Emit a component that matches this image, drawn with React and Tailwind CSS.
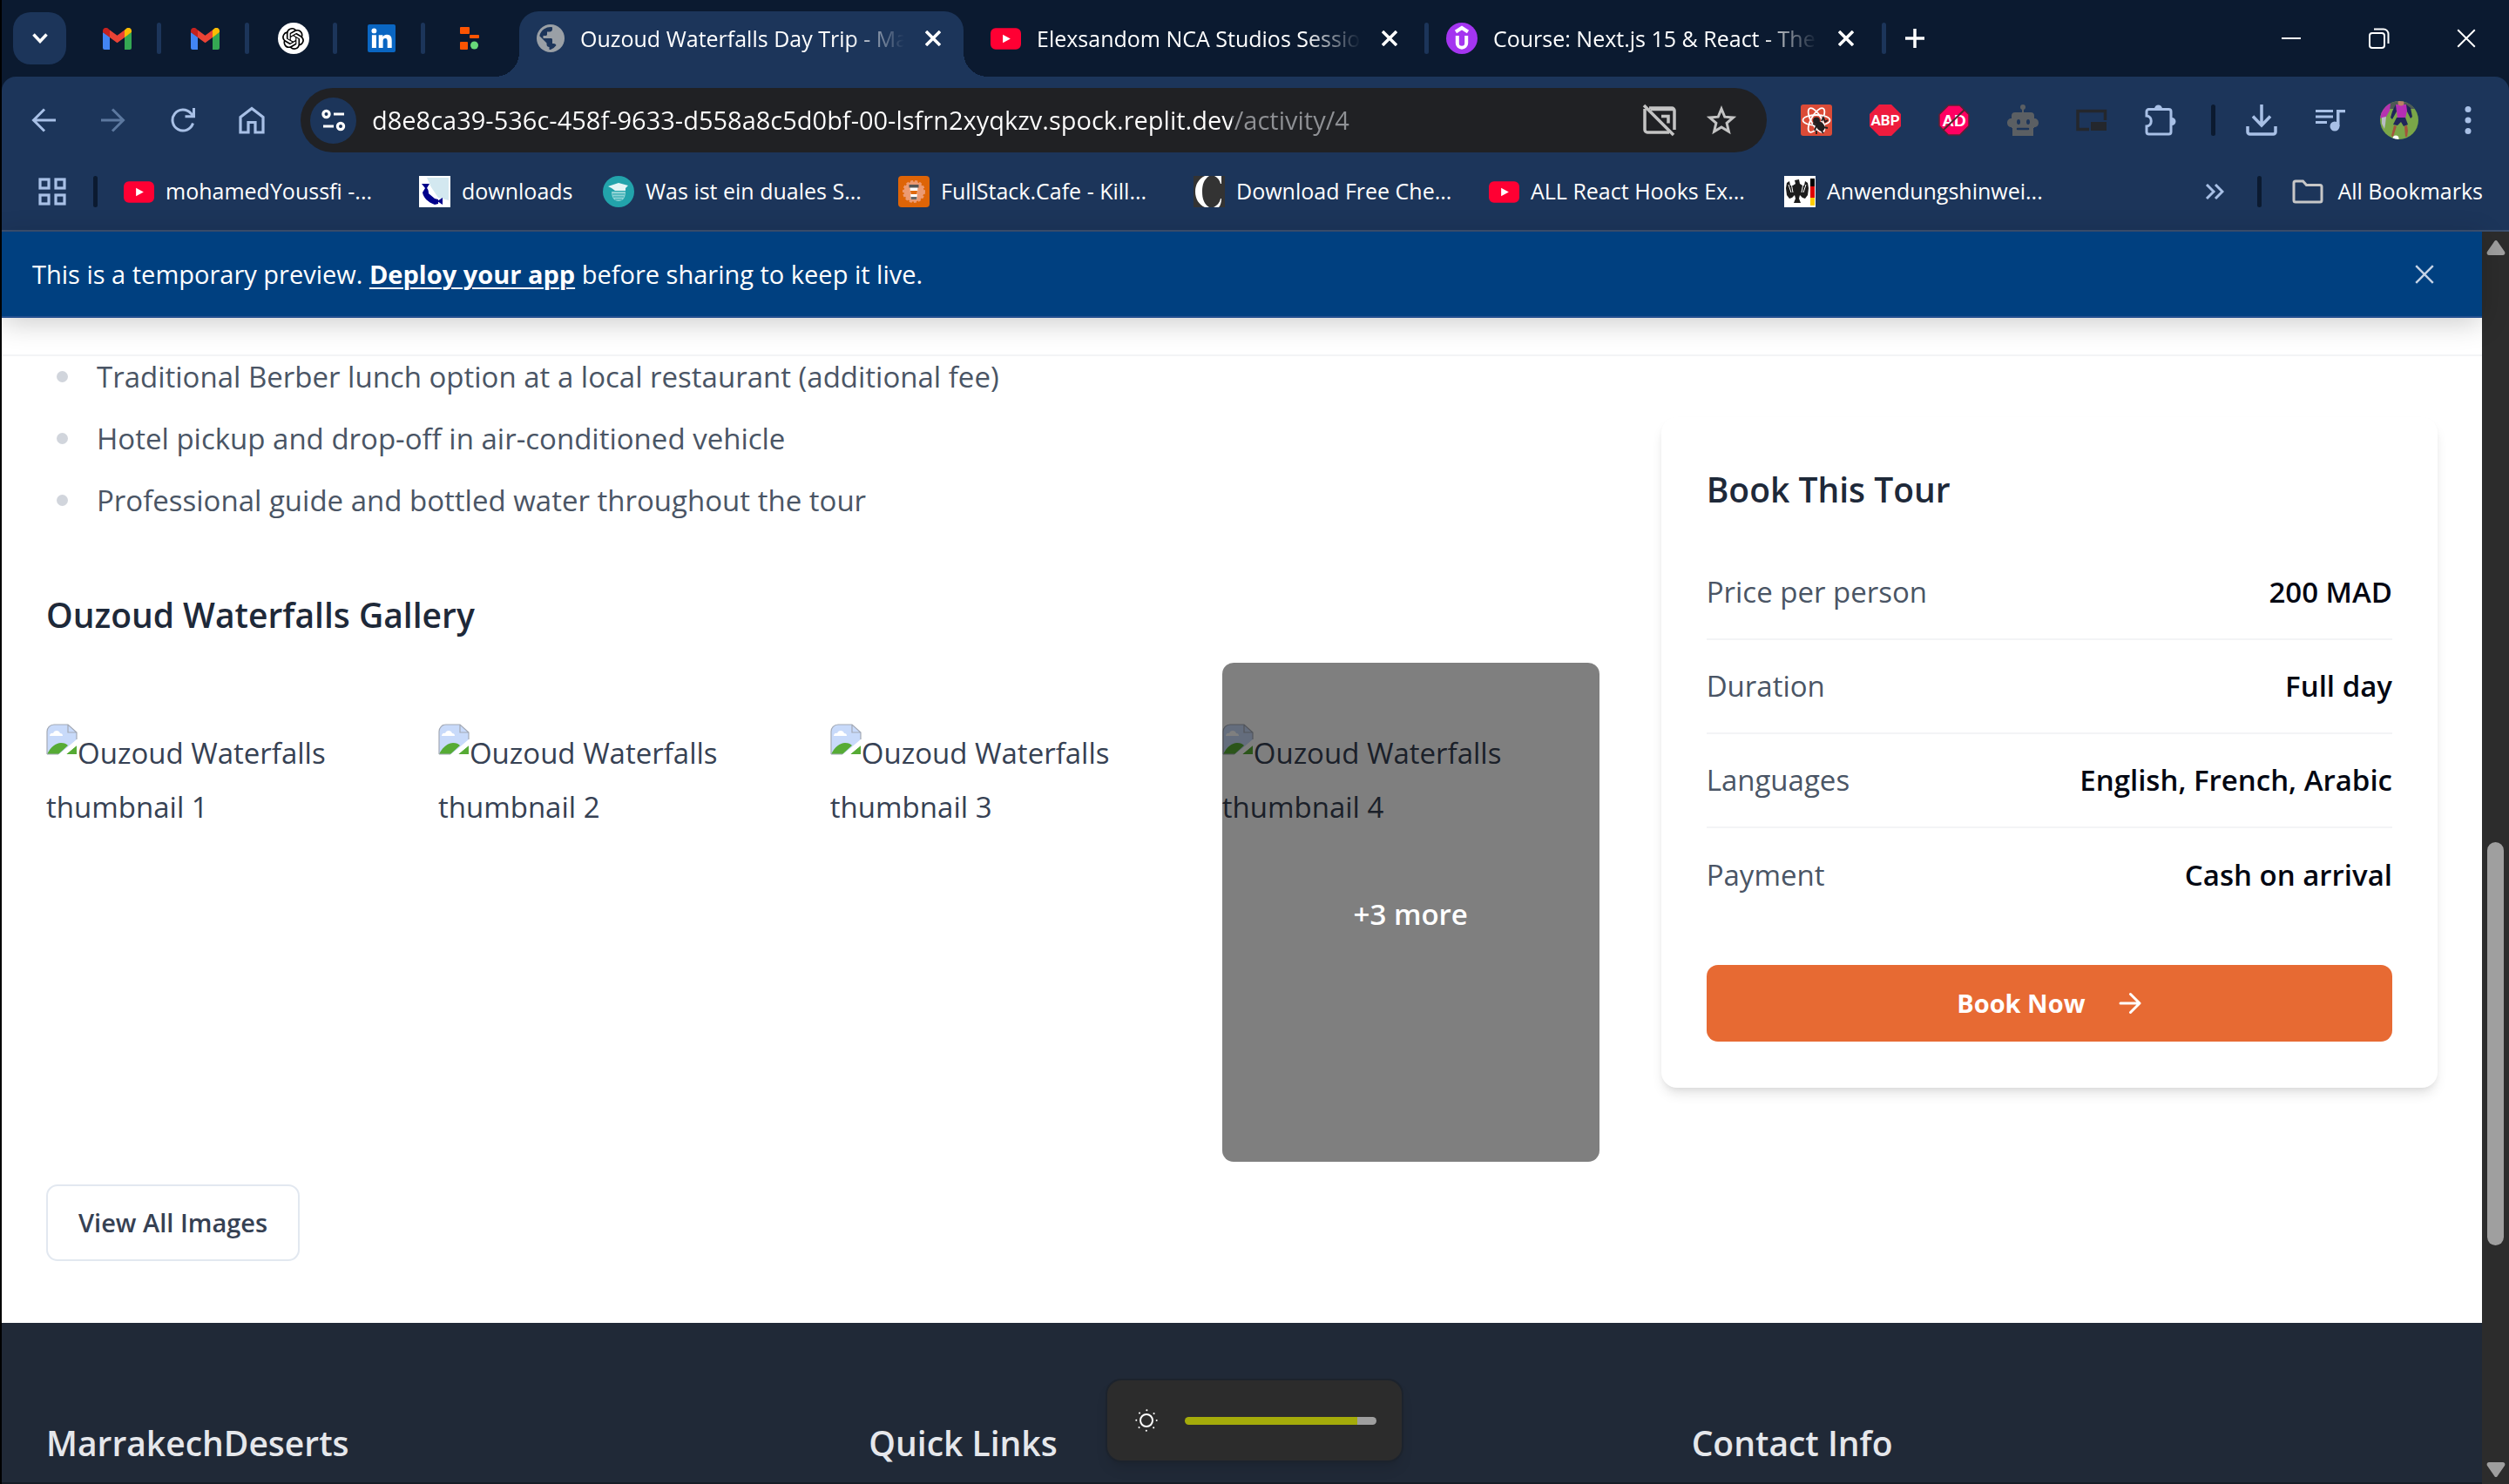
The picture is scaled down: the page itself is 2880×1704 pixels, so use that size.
import React from "react";
import { SiOpenai } from "react-icons/si";

/* ---------- favicons ---------- */

function Gmail() {
  return (
    <svg viewBox="0 0 33 25" className="h-[25px] w-[33px]" aria-hidden="true">
      <path d="M0 5v18a2 2 0 0 0 2 2h6V10z" fill="#4285f4" />
      <path d="M33 5v18a2 2 0 0 1-2 2h-6V10z" fill="#34a853" />
      <path d="M25 2.500v8.500l8-6V3.400C33 .4 29.500-1.300 27 .7z" fill="#fbbc04" />
      <path d="M0 3.400V5l8 6V2.500L6 .7C3.500-1.300 0 .4 0 3.400z" fill="#c5221f" />
      <path d="M8 11V2.500l8.500 6.300L25 2.500V11l-8.500 6.300z" fill="#ea4335" />
    </svg>
  );
}

function OpenAI() {
  return (
    <span className="flex size-9 items-center justify-center rounded-full bg-white text-black">
      <SiOpenai className="size-[25px]" />
    </span>
  );
}

function LinkedIn() {
  return (
    <svg viewBox="0 0 32 32" className="size-8" aria-hidden="true">
      <rect width="32" height="32" rx="2" fill="#0a66c2" />
      <circle cx="7.400" cy="7.400" r="2.900" fill="#fff" />
      <path d="M4.900 12.200h5V27h-5zM12.700 12.200h4.700v2c.8-1.400 2.500-2.500 4.700-2.500 4.600 0 5.600 3 5.600 7V27h-5v-7.300c0-1.900-.3-3.800-2.400-3.800-2.200 0-2.700 1.700-2.700 3.700V27h-4.900z" fill="#fff" />
    </svg>
  );
}

function Replit() {
  return (
    <svg viewBox="0 0 24 26" className="h-[26px] w-6" aria-hidden="true">
      <rect x="1" y="0" width="11" height="8" rx="1" fill="#fd5402" />
      <rect x="12" y="9" width="11" height="4" rx="1" fill="#fd5402" />
      <rect x="1" y="17" width="9" height="9" rx="1" fill="#fd5402" />
      <circle cx="17.500" cy="21" r="4.500" fill="#68d97a" />
    </svg>
  );
}

function Globe() {
  return (
    <svg viewBox="0 0 32 32" className="size-8 shrink-0" aria-hidden="true">
      <circle cx="16" cy="16" r="16" fill="#9aa0a6" />
      <path d="M18 3.200v2.300c0 1.700-1.300 3-3 3h-3v3c0 .9-.7 1.500-1.500 1.500H7.500v3h9c.9 0 1.500.7 1.500 1.500V22h1.500c1.400 0 2.500.8 3 2A13 13 0 0 1 16 29c-.5 0-1 0-1.500-.1V26c-1.700 0-3-1.300-3-3v-1.500L3.300 13.300A13 13 0 0 1 18 3.200z" fill="#1c355a" />
    </svg>
  );
}

function YouTube() {
  return (
    <svg viewBox="0 0 36 25" className="h-[25px] w-[35px] shrink-0" aria-hidden="true">
      <rect width="36" height="25" rx="6" fill="#ff0033" />
      <path d="M14.500 7.500v10l9-5z" fill="#fff" />
    </svg>
  );
}

function Udemy() {
  return (
    <svg viewBox="0 0 36 36" className="size-9 shrink-0" aria-hidden="true">
      <circle cx="18" cy="18" r="18" fill="#a435f0" />
      <path d="m11 10.500 7-4.500 7 4.500M12.800 15v8.500a5.200 5.200 0 0 0 10.400 0V15" fill="none" stroke="#fff" strokeWidth="4" />
    </svg>
  );
}

function DownloadsIcon() {
  return (
    <svg viewBox="0 0 36 36" className="size-9 shrink-0" aria-hidden="true">
      <rect width="36" height="36" fill="#fff" />
      <path d="M9 2h25v26l-12-3-8-12z" fill="#d3e8f0" />
      <path d="M3 9h9l-3 5c3 3 1 6 3 7l6 5 4 1v5l-4 1c-8-3-13-8-14-14l3-5z" fill="#00008b" />
      <path d="m21 29 6-4v8z" fill="#00008b" />
    </svg>
  );
}

function DualesIcon() {
  return (
    <svg viewBox="0 0 36 36" className="size-9 shrink-0" aria-hidden="true">
      <circle cx="18" cy="18" r="18" fill="#22a3ab" />
      <path d="m6 12 12-4 11 3-3 3v3H14l-4-3z" fill="#e4f5f5" />
      <path d="M10 18h16c0 7-3 11-8 11s-8-4-8-11z" fill="#8fd3d5" />
      <path d="M11 21h14M12 24h12M14 27h8" stroke="#22a3ab" strokeWidth="1.200" />
    </svg>
  );
}

function CafeIcon() {
  return (
    <svg viewBox="0 0 36 36" className="size-9 shrink-0" aria-hidden="true">
      <rect width="36" height="36" rx="4" fill="#de6407" />
      <circle cx="18" cy="18" r="11.500" fill="#ec9a72" stroke="#ec9a72" strokeWidth="3" strokeDasharray="3 2" />
      <path d="M13.500 13h9l-1.200 14h-6.600z" fill="#fff" />
      <path d="M12.500 10h11v3.500h-11z" fill="#555" />
      <path d="M14 17h8l-.5 4h-7z" fill="#e06a10" />
      <path d="M14.500 24h7l-.3 3h-6.400z" fill="#666" />
    </svg>
  );
}

function CvIcon() {
  return (
    <svg viewBox="0 0 36 36" className="size-9 shrink-0" aria-hidden="true">
      <rect width="36" height="36" fill="#333" />
      <path d="M13 0h5C12 4 10 10 10 18s2 14 8 18h-5C6 33 2 26 2 18S6 3 13 0z" fill="#fff" />
      <path d="M24 0h8v9h-1c-1-4-3-7-7-9zM31 26h1c0 4-1 8-3 10h-6c4-2 7-5 8-10z" fill="#fff" />
    </svg>
  );
}

function EagleIcon() {
  return (
    <svg viewBox="0 0 36 36" className="size-9 shrink-0" aria-hidden="true">
      <rect width="36" height="36" fill="#fff" />
      <path d="m12 5 5-1 1 5 3 2h2l1-5 3 2 1 6-1 8-3 4-3-1-3-3-1 4 2 5h-8l2-5-1-4-3 3-3 1-3-4-1-8 1-6 3-2 1 5h3l3-2z" fill="#1c1c1c" />
      <path d="m5 10 3 9m0-11 2 11m15-9-3 9m0-11-2 11" stroke="#fff" strokeWidth="1" />
      <rect x="30" y="3" width="5" height="9" fill="#000" />
      <rect x="30" y="12" width="5" height="13" fill="#e00000" />
      <rect x="30" y="25" width="5" height="9" fill="#ffcc00" />
    </svg>
  );
}

/* ---------- line icons ---------- */

function Line({ box, className, width = 3, children, ...rest }) {
  return (
    <svg viewBox={box} className={className} fill="none" stroke="currentColor" strokeWidth={width} aria-hidden="true" {...rest}>
      {children}
    </svg>
  );
}

const CloseGlyph = ({ className = "size-[18px]", width = 3.500 }) => (
  <Line box="0 0 18 18" className={className} width={width}>
    <path d="m1 1 16 16M17 1 1 17" />
  </Line>
);

const BackIcon = () => (
  <Line box="0 0 28 28" className="size-7" width={3}>
    <path d="M28 14H3M15 1.500 2.500 14 15 26.500" />
  </Line>
);
const ForwardIcon = () => (
  <Line box="0 0 28 28" className="size-7" width={3}>
    <path d="M0 14h25M13 1.500 25.500 14 13 26.500" />
  </Line>
);
const ReloadIcon = () => (
  <Line box="0 0 28 28" className="size-7" width={3}>
    <path d="M25.500 17.500A12 12 0 1 1 23 6l3 3M26.500 0v9.800h-10" />
  </Line>
);
const HomeIcon = () => (
  <Line box="0 0 30 32" className="h-8 w-[30px]" width={3.200}>
    <path d="M2 12.500 15 2.500l13 10V30h-9V18.500h-8V30H2z" />
  </Line>
);
const TuneIcon = () => (
  <Line box="0 0 28 28" className="size-7" width={3.200}>
    <circle cx="5.500" cy="7" r="3.600" />
    <path d="M14 7h12M2 21h12" />
    <circle cx="22" cy="21" r="3.600" />
  </Line>
);
const BlockedIcon = () => (
  <Line box="0 0 40 38" className="h-[38px] w-10" width={3.500}>
    <path d="M8 5h26a3 3 0 0 1 3 3v22M31 33H6a3 3 0 0 1-3-3V6" />
    <path d="M10 6.500h27M22 14.500h8v8" />
    <path d="m2 2 34 34" />
  </Line>
);
const StarIcon = () => (
  <Line box="0 0 36 36" className="size-9" width={3} strokeLinejoin="miter">
    <path d="m18 5 3.800 9.200 9.700.8-7.400 6.400 2.300 9.600L18 25.900 9.600 31l2.300-9.600L4.500 15l9.700-.8z" />
  </Line>
);

const ReactDevIcon = () => (
  <svg viewBox="0 0 36 36" className="size-9" aria-hidden="true">
    <rect width="36" height="36" rx="3" fill="#db4b37" />
    <g fill="none" stroke="#fff" strokeWidth="1.800">
      <ellipse cx="18" cy="18" rx="15.500" ry="6" />
      <ellipse cx="18" cy="18" rx="15.500" ry="6" transform="rotate(60 18 18)" />
      <ellipse cx="18" cy="18" rx="15.500" ry="6" transform="rotate(120 18 18)" />
    </g>
    <g fill="#231f20" stroke="#231f20" strokeWidth="1.800">
      <circle cx="18" cy="18.500" r="3" />
      <ellipse cx="22.500" cy="25" rx="3.500" ry="5" transform="rotate(-40 22.500 25)" />
      <path d="m14 22 4 2-2 6m8-11 2-4 2 5 3-2m-5 8 5 1m-8 2 3 4m-8-3v4" fill="none" />
    </g>
  </svg>
);
const AbpIcon = () => (
  <svg viewBox="0 0 36 36" className="size-9" aria-hidden="true">
    <path d="M11 0h14l11 11v14L25 36H11L0 25V11z" fill="#ee1c3e" />
    <text x="18" y="24" textAnchor="middle" fontFamily="Roboto, sans-serif" fontWeight="700" fontSize="17" fill="#fff">ABP</text>
  </svg>
);
const AdIcon = () => (
  <svg viewBox="0 0 36 36" className="size-9" aria-hidden="true">
    <path d="M11.500 1h13L35 11.500v13L24.500 35h-13L1 24.500v-13z" fill="#ff0062" stroke="#5c2034" strokeWidth="1.500" />
    <text x="18" y="25" textAnchor="middle" fontFamily="Liberation Sans, sans-serif" fontWeight="700" fontSize="19" fill="#fff">AD</text>
    <path d="M5 30 30 6" stroke="#50252f" strokeWidth="2" />
  </svg>
);
const RobotIcon = () => (
  <svg viewBox="0 0 36 36" className="size-9" aria-hidden="true">
    <g fill="#5b5f63">
      <circle cx="18" cy="3" r="3" />
      <path d="M17 4h2v6h-2z" />
      <path d="M9 9h18a4 4 0 0 1 4 4v3c3 0 5 2 5 5s-2 5-5 5v1h-1v9H6v-9H5v-1c-3 0-5-2-5-5s2-5 5-5v-3a4 4 0 0 1 4-4z" />
    </g>
    <g fill="#1c355a">
      <ellipse cx="13" cy="20" rx="2" ry="3" />
      <ellipse cx="24" cy="20" rx="2" ry="3" />
    </g>
    <path d="M12 28h12" stroke="#1c355a" strokeWidth="2.500" strokeLinecap="round" />
  </svg>
);
const PipIcon = () => (
  <svg viewBox="0 0 36 26" className="h-[26px] w-9" aria-hidden="true">
    <path d="M15 23.500H2v-21h31.500V13" fill="none" stroke="#24272c" strokeWidth="3.500" />
    <rect x="17" y="15" width="18" height="10" fill="#24272c" />
  </svg>
);
const PuzzleIcon = () => (
  <svg viewBox="0 0 36 36" className="size-9" aria-hidden="true">
    <path d="M4.500 5.500h23a2.500 2.500 0 0 1 2.500 2.500v23.500a2.500 2.500 0 0 1-2.500 2.500h-23A2.500 2.500 0 0 1 2 31.500v-6.500c7-.5 7-11.500 0-12V8a2.500 2.500 0 0 1 2.500-2.500z" fill="none" stroke="#a8c0e6" strokeWidth="3" />
    <path d="M11 5a4.500 4.500 0 0 1 9 0zM31 15a4.500 4.500 0 0 1 0 9z" fill="#a8c0e6" />
  </svg>
);
const DownloadIcon = () => (
  <Line box="0 0 36 36" className="size-9" width={3.500}>
    <path d="M18 0v24M8 13.500 18 24l10-10.500M2 25v6.500A2.500 2.500 0 0 0 4.500 34h27a2.500 2.500 0 0 0 2.500-2.500V25" />
  </Line>
);
const MusicIcon = () => (
  <svg viewBox="0 0 34 26" className="h-[26px] w-[34px]" fill="currentColor" aria-hidden="true">
    <path d="M0 1h20v3H0zM0 7.500h20v3H0zM0 14h13v3H0z" />
    <path d="M24 1h10v3.200h-6.500V20H24z" />
    <circle cx="22" cy="20" r="5.500" />
  </svg>
);
const Avatar = () => (
  <svg viewBox="0 0 44 44" className="size-11" aria-hidden="true">
    <defs>
      <clipPath id="avatarClip">
        <circle cx="22" cy="22" r="22" />
      </clipPath>
    </defs>
    <g clipPath="url(#avatarClip)">
      <rect width="44" height="44" fill="#7aa648" />
      <rect width="44" height="9" fill="#4d5a55" />
      <path d="M4 3h8l-1 8-4 7-6 2-1-3z" fill="#b532b0" />
      <path d="m2 19 5-1-1 9-1 5-3-6z" fill="#b9bcc4" />
      <path d="m18 4-4 8-2 7 2 2 5-9zM30 4l5 4 2 10-2 2-5-10z" fill="#1d2458" />
      <path d="m18 4 12 0 1 7-2 9-9 0-1-9z" fill="#b52eb4" />
      <circle cx="24" cy="2" r="3.500" fill="#b98266" />
      <path d="M19 19h10l3 8-5 2-3-5-4 4-5-1z" fill="#20265a" />
      <path d="m16 28 3 1-2 6-2 6-2-1zM28 29l3-1 1 6-1 7-2 0z" fill="#a5523c" />
      <circle cx="18" cy="43" r="3.500" fill="#fff" />
    </g>
  </svg>
);
const DotsIcon = () => (
  <svg viewBox="0 0 8 34" className="h-[34px] w-2" fill="currentColor" aria-hidden="true">
    <circle cx="4" cy="4.500" r="3.500" />
    <circle cx="4" cy="17" r="3.500" />
    <circle cx="4" cy="29.500" r="3.500" />
  </svg>
);
const AppsIcon = () => (
  <Line box="0 0 32 32" className="size-8" width={3.200}>
    <rect x="2" y="2" width="10" height="10" />
    <rect x="20" y="2" width="10" height="10" />
    <rect x="2" y="20" width="10" height="10" />
    <rect x="20" y="20" width="10" height="10" />
  </Line>
);
const FolderIcon = () => (
  <Line box="0 0 36 28" className="h-7 w-9" width={3}>
    <path d="M4 2h8.500l4 4.500H32a2 2 0 0 1 2 2V24a2 2 0 0 1-2 2H4a2 2 0 0 1-2-2V4a2 2 0 0 1 2-2z" />
  </Line>
);
const BrokenImage = () => (
  <svg viewBox="0 0 36 36" className="inline size-9 align-[10px]" aria-hidden="true">
    <path d="M9 1h16l10 9v8L15 35H1V9a8 8 0 0 1 8-8z" fill="#c8dafa" />
    <path d="M4 14c0-3 3-4 4-3 1-4 7-4 8 0 2 0 3 1 3 3z" fill="#fff" />
    <path d="M1 35c4-8 10-13 16-13 4 0 6 1 8 3L14 35z" fill="#56ab35" />
    <path d="m23 35 12-10v10z" fill="#56ab35" />
    <path d="M35 19v6L23 35h-8z" fill="#fff" />
    <path d="M1 35V9a8 8 0 0 1 8-8h16l10 9v8M25 1v9h10M1 35h13" fill="none" stroke="#a3a9b5" strokeWidth="1.200" />
  </svg>
);

/* ---------- browser chrome ---------- */

const pinned = [
  { label: "Gmail", Icon: Gmail },
  { label: "Gmail inbox", Icon: Gmail },
  { label: "ChatGPT", Icon: OpenAI },
  { label: "LinkedIn", Icon: LinkedIn },
  { label: "Replit", Icon: Replit },
];

function Separator({ className }) {
  return <span className={`h-9 w-[5px] shrink-0 rounded-full ${className}`} />;
}

function TabTitle({ children }) {
  return (
    <span className="ml-[18px] mr-[24px] min-w-0 flex-1 whitespace-nowrap pt-[2px] [mask-image:linear-gradient(to_right,black_calc(100%-64px),transparent)]">
      {children}
    </span>
  );
}

function TabStrip() {
  return (
    <div className="flex h-[88px] items-center text-[25px] text-white">
      <button aria-label="Search tabs" className="ml-[13px] flex h-15 w-[61px] items-center justify-center rounded-[20px] bg-[#1c355a]">
        <Line box="0 0 18 12" className="h-3 w-[18px]" width={3.500}>
          <path d="m1.500 1.500 7.500 8 7.500-8" />
        </Line>
      </button>
      <div className="ml-[8px] flex">
        {pinned.map(({ label, Icon }, i) => (
          <div key={label} className="flex w-[101px] items-center">
            <button aria-label={label} className="flex h-9 flex-1 items-center justify-center pl-[5px]">
              <Icon />
            </button>
            <Separator className={i < 4 ? "bg-[#1c355a]" : "bg-transparent"} />
          </div>
        ))}
      </div>
      <div className="relative ml-[7px] mt-[13px] flex h-[75px] w-[510px] items-center rounded-t-[22px] bg-[#1c355a] pb-[13px] pl-[20px] pr-[26px] before:absolute before:-left-7 before:bottom-0 before:size-7 before:bg-[radial-gradient(circle_at_0_0,transparent_28px,#1c355a_28px)] after:absolute after:-right-7 after:bottom-0 after:size-7 after:bg-[radial-gradient(circle_at_100%_0,transparent_28px,#1c355a_28px)]">
        <Globe />
        <TabTitle>Ouzoud Waterfalls Day Trip - Ma</TabTitle>
        <button aria-label="Close tab"><CloseGlyph /></button>
      </div>
      <div className="flex w-[534px] items-center pl-[31px]">
        <YouTube />
        <TabTitle>Elexsandom NCA Studios Sessio</TabTitle>
        <button aria-label="Close tab" className="mr-[31px]"><CloseGlyph /></button>
        <Separator className="bg-[#1c355a]" />
      </div>
      <div className="flex w-[525px] items-center pl-[20px]">
        <Udemy />
        <TabTitle>Course: Next.js 15 &amp; React - The</TabTitle>
        <button aria-label="Close tab" className="mr-[32px]"><CloseGlyph /></button>
        <Separator className="bg-[#1c355a]" />
      </div>
      <button aria-label="New tab" className="ml-[22px]">
        <Line box="0 0 22 22" className="size-[22px]" width={3.500}>
          <path d="M11 0v22M0 11h22" />
        </Line>
      </button>
      <div className="ml-auto flex">
        <button aria-label="Minimize" className="flex w-[101px] items-center justify-center">
          <Line box="0 0 22 22" className="size-[22px]" width={2}><path d="M0 11h22" /></Line>
        </button>
        <button aria-label="Restore" className="flex w-[101px] items-center justify-center">
          <Line box="0 0 24 24" className="size-6" width={2}>
            <rect x="1" y="6" width="17" height="17" rx="3" />
            <path d="M6 1.500h11a5.500 5.500 0 0 1 5.500 5.500v11" />
          </Line>
        </button>
        <button aria-label="Close window" className="flex w-[99px] items-center justify-center">
          <CloseGlyph className="size-[22px]" width={1.600} />
        </button>
      </div>
    </div>
  );
}

const extensions = [
  ["React Developer Tools", ReactDevIcon],
  ["Adblock Plus", AbpIcon],
  ["Ad skipper", AdIcon],
  ["Robot", RobotIcon],
  ["Picture in picture", PipIcon],
  ["Extensions", PuzzleIcon],
];
const tools = [
  ["Downloads", DownloadIcon],
  ["Media controls", MusicIcon],
  ["Profile", Avatar],
  ["Menu", DotsIcon],
];

function Toolbar() {
  return (
    <div className="flex h-[100px] items-center pl-2 pr-2 text-[#a8c0e6]">
      <button aria-label="Back" className="flex w-20 justify-center"><BackIcon /></button>
      <button aria-label="Forward" className="flex w-20 justify-center text-[#5c789f]"><ForwardIcon /></button>
      <button aria-label="Reload" className="flex w-[79px] justify-center"><ReloadIcon /></button>
      <button aria-label="Home" className="flex w-[79px] justify-center"><HomeIcon /></button>
      <div className="ml-[17px] flex h-[74px] flex-1 items-center rounded-full bg-[#202124] pl-[11px] pr-[34px]">
        <button aria-label="Site information" className="flex size-[53px] items-center justify-center rounded-full bg-[#1c355a] text-white">
          <TuneIcon />
        </button>
        <input
          type="text"
          aria-label="Address"
          readOnly
          defaultValue="d8e8ca39-536c-458f-9633-d558a8c5d0bf-00-lsfrn2xyqkzv.spock.replit.dev/activity/4"
          className="ml-[18px] min-w-0 flex-1 bg-[linear-gradient(to_right,white_987px,#8f9195_987px)] bg-clip-text text-[29px] text-transparent outline-none"
        />
        <div className="flex items-center gap-[33px] text-[#c4c4c4]">
          <button aria-label="Pop-up blocked"><BlockedIcon /></button>
          <button aria-label="Bookmark this tab"><StarIcon /></button>
        </div>
      </div>
      <div className="ml-[17px] flex items-center">
        {extensions.map(([label, Icon]) => (
          <button key={label} aria-label={label} className="flex w-[79px] items-center justify-center"><Icon /></button>
        ))}
        <Separator className="ml-[19px] mr-[13px] bg-[#0b1a30]" />
        {tools.map(([label, Icon]) => (
          <button key={label} aria-label={label} className="flex w-[79px] items-center justify-center"><Icon /></button>
        ))}
      </div>
    </div>
  );
}

const bookmarks = [
  { label: "mohamedYoussfi -...", Icon: YouTube, width: "w-[339px]" },
  { label: "downloads", Icon: DownloadsIcon, width: "w-[211px]" },
  { label: "Was ist ein duales S...", Icon: DualesIcon, width: "w-[339px]" },
  { label: "FullStack.Cafe - Kill...", Icon: CafeIcon, width: "w-[339px]" },
  { label: "Download Free Che...", Icon: CvIcon, width: "w-[339px]" },
  { label: "ALL React Hooks Ex...", Icon: YouTube, width: "w-[339px]" },
  { label: "Anwendungshinwei...", Icon: EagleIcon, width: "w-[339px]" },
];

function BookmarkBar() {
  return (
    <div className="flex h-16 items-center text-[25px] text-white">
      <button aria-label="Apps" className="ml-[42px] text-[#a8c0e6]"><AppsIcon /></button>
      <Separator className="ml-[31px] mr-[30px] bg-[#0b1a30]" />
      {bookmarks.map(({ label, Icon, width }) => (
        <a key={label} href="#" className={`flex items-center gap-[13px] whitespace-nowrap ${width}`}>
          <Icon />
          {label}
        </a>
      ))}
      <button aria-label="More bookmarks" className="ml-auto text-[#a8c0e6]">
        <Line box="0 0 22 18" className="h-[18px] w-[22px]" width={3}>
          <path d="m2 1 8 8-8 8M12 1l8 8-8 8" />
        </Line>
      </button>
      <Separator className="ml-[38px] mr-[35px] bg-[#0b1a30]" />
      <button className="mr-[30px] flex items-center gap-4">
        <span className="text-[#c7c7c7]"><FolderIcon /></span>
        All Bookmarks
      </button>
    </div>
  );
}

/* ---------- page ---------- */

function Banner() {
  return (
    <div className="relative z-10 flex items-center justify-between border-b-2 border-[#25508f] bg-[#004080] py-7 pl-[35px] pr-[55px] text-[29px] leading-[41px] text-white shadow-[0_6px_30px_rgba(0,0,0,0.2)]">
      <p>
        This is a temporary preview. <a href="#" className="font-bold underline decoration-2 underline-offset-4">Deploy your app</a> before sharing to keep it live.
      </p>
      <button aria-label="Dismiss" className="text-[#c5d3e6]">
        <CloseGlyph className="size-[22px]" width={2} />
      </button>
    </div>
  );
}

const inclusions = [
  "Traditional Berber lunch option at a local restaurant (additional fee)",
  "Hotel pickup and drop-off in air-conditioned vehicle",
  "Professional guide and bottled water throughout the tour",
];

function Gallery() {
  return (
    <section>
      <h3 className="mt-[81px] text-[39px] font-semibold leading-[54px] text-gray-800">Ouzoud Waterfalls Gallery</h3>
      <div className="mt-7 grid grid-cols-4 gap-[17px]">
        {[1, 2, 3, 4].map((n) => (
          <div key={n} className="relative h-[573px] overflow-hidden rounded-[13px] pt-[70px] text-[33px] leading-[62px] text-gray-700">
            <BrokenImage />Ouzoud Waterfalls<br />thumbnail {n}
            {n === 4 && (
              <button className="absolute inset-0 flex items-center justify-center bg-black/50 pt-1 font-semibold text-white">+3 more</button>
            )}
          </div>
        ))}
      </div>
      <button className="mt-[26px] rounded-[13px] border-2 border-slate-200 px-[35px] text-[29px] font-semibold leading-[84px] text-gray-700">
        View All Images
      </button>
    </section>
  );
}

const facts = [
  ["Price per person", "200 MAD"],
  ["Duration", "Full day"],
  ["Languages", "English, French, Arabic"],
  ["Payment", "Cash on arrival"],
];

function BookingCard() {
  return (
    <aside className="mt-[70px] self-start rounded-[18px] bg-white px-[52px] pb-[53px] pt-14 shadow-[0_9px_14px_-2px_rgba(0,0,0,0.1),0_4px_9px_-4px_rgba(0,0,0,0.1)]">
      <h3 className="text-[39px] font-semibold leading-[54px] text-gray-800">Book This Tour</h3>
      <dl className="mt-[38px] divide-y-2 divide-gray-100">
        {facts.map(([k, v]) => (
          <div key={k} className="flex h-[108px] items-center justify-between text-[33px]">
            <dt className="text-gray-600">{k}</dt>
            <dd className="font-semibold text-gray-950">{v}</dd>
          </div>
        ))}
      </dl>
      <button className="mt-[49px] flex h-22 w-full items-center justify-center gap-[39px] rounded-[13px] bg-[#e76a33] text-[29px] font-bold text-white">
        Book Now
        <Line box="0 0 26 26" className="size-[26px]" width={3} strokeLinecap="round" strokeLinejoin="round">
          <path d="M2 13h22M13.500 2.500 24 13 13.500 23.500" />
        </Line>
      </button>
    </aside>
  );
}

function ScrollBar() {
  return (
    <div className="flex w-[31px] shrink-0 flex-col items-center bg-[#2c2c2c]" aria-hidden="true">
      <svg viewBox="0 0 22 17" className="mt-[10px] h-[17px] w-[22px]" fill="#9f9f9f">
        <path d="M9 1.500 1 13c-1 2 0 4 2 4h16c2 0 3-2 2-4L13 1.500c-1-2-3-2-4 0z" />
      </svg>
      <div className="grow-[674] basis-0" />
      <div className="w-[19px] grow-[463] basis-0 rounded-full bg-[#9f9f9f]" />
      <div className="grow-[249] basis-0" />
      <svg viewBox="0 0 22 17" className="mb-2 h-[17px] w-[22px]" fill="#9f9f9f">
        <path d="M9 15.500 1 4C0 2 1 0 3 0h16c2 0 3 2 2 4l-8 11.500c-1 2-3 2-4 0z" />
      </svg>
    </div>
  );
}

function BrightnessFlyout() {
  return (
    <div className="fixed bottom-[25px] left-1/2 flex h-24 w-[342px] -translate-x-1/2 items-center rounded-[18px] border-2 border-[#1c232d] bg-[#2c2c2c] pl-[32px] pr-[29px] shadow-lg">
      <svg viewBox="0 0 26 26" className="mr-[31px] size-[26px] shrink-0" aria-hidden="true">
        <circle cx="13" cy="13" r="7" fill="none" stroke="#fff" strokeWidth="2" />
        <circle cx="13" cy="13" r="11.700" fill="none" stroke="#fff" strokeWidth="2" strokeLinecap="round" strokeDasharray="0.1 9.090" />
      </svg>
      <input
        type="range"
        aria-label="Brightness"
        defaultValue="90"
        className="h-[9px] min-w-0 flex-1 appearance-none rounded-full bg-[linear-gradient(to_right,#a4ab0a_90%,#9f9f9f_90%)] [&::-webkit-slider-thumb]:size-0 [&::-webkit-slider-thumb]:appearance-none"
      />
    </div>
  );
}

export default function App() {
  return (
    <div className="flex min-h-screen flex-col border-l-2 border-black bg-[#0b1a30] font-['Open_Sans','Noto_Sans',sans-serif]">
      <header>
        <TabStrip />
        <div className="rounded-t-2xl border-b-2 border-[#3c5070] bg-[#1c355a] pb-3">
          <Toolbar />
          <BookmarkBar />
        </div>
      </header>
      <div className="flex flex-1">
        <div className="flex min-w-0 flex-1 flex-col bg-white">
          <Banner />
          <div className="h-11 border-b-2 border-gray-100" />
          <main className="grid grid-cols-[2fr_1fr] gap-[71px] px-[51px] pb-[71px]">
            <div>
              <ul className="space-y-6 text-[33px] leading-[47px] text-gray-600">
                {inclusions.map((t) => (
                  <li key={t} className="flex items-center gap-[33px] pl-3">
                    <span className="size-[13px] rounded-full bg-gray-300" />
                    {t}
                  </li>
                ))}
              </ul>
              <Gallery />
            </div>
            <BookingCard />
          </main>
          <footer className="grid flex-1 grid-cols-3 content-start gap-[88px] border-b-2 border-[#151c26] bg-[#202937] px-[51px] pt-[111px] text-[39px] font-semibold leading-[54px] text-gray-200">
            <h3>MarrakechDeserts</h3>
            <h3>Quick Links</h3>
            <h3>Contact Info</h3>
          </footer>
        </div>
        <ScrollBar />
      </div>
      <BrightnessFlyout />
    </div>
  );
}
